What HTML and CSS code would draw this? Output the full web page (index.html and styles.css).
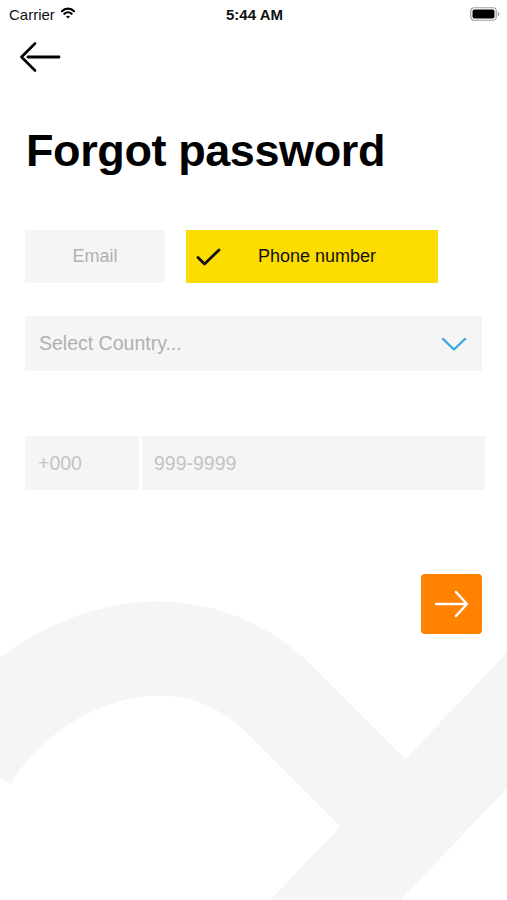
FILE: index.html
```html
<!DOCTYPE html>
<html>
<head>
<meta charset="utf-8">
<link rel="stylesheet" href="styles.css">
</head>
<body>
<div class="screen">
  <svg class="bg-shape" width="507" height="900" viewBox="0 0 507 900">
    <path d="M -30 760 C 30 660, 180 600, 280 700 L 420 840" fill="none" stroke="#f5f5f5" stroke-width="94"/>
    <path d="M 570 655 L 220 1020" fill="none" stroke="#f5f5f5" stroke-width="94"/>
  </svg>

  <div class="status">
    <div class="status-left">
      <span class="carrier">Carrier</span>
      <svg class="wifi" width="14" height="12" viewBox="0 0 14 12">
        <path d="M1 4.2 A 8.5 8.5 0 0 1 13 4.2" fill="none" stroke="#000" stroke-width="2.2" stroke-linecap="round"/>
        <path d="M3.4 6.8 A 5 5 0 0 1 10.6 6.8" fill="none" stroke="#000" stroke-width="2.2" stroke-linecap="round"/>
        <path d="M5 9.6 L7 11.6 L9 9.6 A 2.6 2.6 0 0 0 5 9.6 Z" fill="#000"/>
      </svg>
    </div>
    <span class="time">5:44 AM</span>
    <div class="status-right">
      <svg width="30" height="14" viewBox="0 0 30 14">
        <rect x="0.75" y="0.75" width="25.5" height="12.5" rx="3.5" fill="none" stroke="#a0a0a0" stroke-width="1.2"/>
        <rect x="2.5" y="2.5" width="22" height="9" rx="2" fill="#000"/>
        <path d="M27.8 4.8 Q29.5 5.2 29.5 7 Q29.5 8.8 27.8 9.2 Z" fill="#a0a0a0"/>
      </svg>
    </div>
  </div>

  <div class="content">
    <div class="back">
      <svg width="42" height="30" viewBox="0 0 42 30">
        <path d="M16 1.5 L2.5 15 L16 28.5" fill="none" stroke="#000" stroke-width="2.6" stroke-linecap="round" stroke-linejoin="round"/>
        <path d="M9 15 L40 15" fill="none" stroke="#000" stroke-width="2.8" stroke-linecap="round"/>
      </svg>
    </div>

    <h1 class="title">Forgot password</h1>

    <div class="toggle">
      <div class="tab tab-off">Email</div>
      <div class="tab tab-on">
        <svg class="check" width="26" height="20" viewBox="0 0 26 20">
          <path d="M2 10.5 L8.5 17 L23 3" fill="none" stroke="#111" stroke-width="2.8" stroke-linecap="round" stroke-linejoin="round"/>
        </svg>
        <span>Phone number</span>
      </div>
    </div>

    <div class="select">
      <span class="placeholder">Select Country...</span>
      <svg width="26" height="14" viewBox="0 0 26 14">
        <path d="M2 2 L13 12.5 L24 2" fill="none" stroke="#3aa8e0" stroke-width="2.4" stroke-linecap="round" stroke-linejoin="round"/>
      </svg>
    </div>

    <div class="phone">
      <div class="code">+000</div>
      <div class="number">999-9999</div>
    </div>

    <div class="actions">
      <div class="go">
        <svg width="40" height="30" viewBox="0 0 40 30">
          <path d="M4 15 L34 15" fill="none" stroke="#fff" stroke-width="2.4" stroke-linecap="round"/>
          <path d="M24 3 L35 15 L24 27" fill="none" stroke="#fff" stroke-width="2.4" stroke-linecap="round" stroke-linejoin="round"/>
        </svg>
      </div>
    </div>
  </div>
</div>
</body>
</html>
```

FILE: styles.css
```css
* { box-sizing: border-box; }
html, body {
  margin: 0;
  padding: 0;
  background: #fff;
}
body {
  font-family: "Liberation Sans", Arial, sans-serif;
  color: #000;
}
.screen {
  position: relative;
  width: 507px;
  height: 900px;
  overflow: hidden;
  background: #fff;
}
.bg-shape {
  position: absolute;
  left: 0;
  top: 0;
  z-index: 0;
}
.status {
  position: relative;
  z-index: 1;
  height: 28px;
  display: flex;
  align-items: center;
  justify-content: space-between;
  padding: 0 7px 0 9px;
}
.status-left {
  display: flex;
  align-items: center;
  gap: 6px;
  width: 120px;
}
.carrier {
  font-size: 15px;
  color: #111;
}
.wifi { margin-top: -2px; }
.time {
  font-size: 15px;
  font-weight: bold;
  color: #111;
}
.status-right {
  width: 120px;
  display: flex;
  justify-content: flex-end;
}
.content {
  position: relative;
  z-index: 1;
  padding: 0 0 0 25px;
}
.back {
  margin-top: 14px;
  margin-left: -6px;
  height: 30px;
}
.title {
  margin: 53px 0 0 1px;
  font-size: 45px;
  line-height: 52px;
  font-weight: bold;
  letter-spacing: -0.4px;
}
.toggle {
  margin-top: 53px;
  display: flex;
  gap: 21px;
  height: 53px;
}
.tab {
  height: 53px;
  display: flex;
  align-items: center;
  font-size: 18px;
}
.tab-off {
  width: 140px;
  justify-content: center;
  background: #f5f5f5;
  color: #b0b0b0;
}
.tab-on {
  width: 252px;
  background: #fddc00;
  color: #111;
  padding-left: 10px;
}
.tab-on span {
  margin-left: 36px;
}
.select {
  margin-top: 33px;
  width: 457px;
  height: 55px;
  background: #f5f5f5;
  display: flex;
  align-items: center;
  justify-content: space-between;
  padding: 0 15px 0 14px;
}
.placeholder {
  font-size: 19.5px;
  color: #b0b0b0;
}
.phone {
  margin-top: 65px;
  display: flex;
  gap: 3px;
  height: 54px;
}
.code, .number {
  height: 54px;
  background: #f5f5f5;
  display: flex;
  align-items: center;
  font-size: 19.5px;
  color: #c4c4c4;
}
.code {
  width: 114px;
  padding-left: 13px;
}
.number {
  width: 343px;
  padding-left: 12px;
}
.actions {
  margin-top: 84px;
  width: 457px;
  display: flex;
  justify-content: flex-end;
}
.go {
  width: 61px;
  height: 60px;
  border-radius: 4px;
  background: #ff8200;
  display: flex;
  align-items: center;
  justify-content: center;
}
```
